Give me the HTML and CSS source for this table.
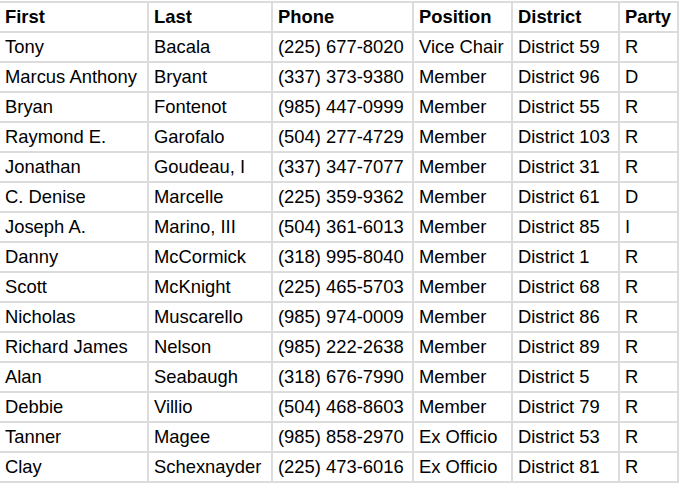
FILE: index.html
```html
<!DOCTYPE html>
<html>
<head>
<meta charset="utf-8">
<link rel="stylesheet" href="styles.css">
</head>
<body>
<div class="grid">
  <div class="c h">First</div><div class="c h">Last</div><div class="c h">Phone</div><div class="c h">Position</div><div class="c h">District</div><div class="c h">Party</div>
  <div class="c">Tony</div><div class="c">Bacala</div><div class="c">(225) 677-8020</div><div class="c">Vice Chair</div><div class="c">District 59</div><div class="c">R</div>
  <div class="c">Marcus Anthony</div><div class="c">Bryant</div><div class="c">(337) 373-9380</div><div class="c">Member</div><div class="c">District 96</div><div class="c">D</div>
  <div class="c">Bryan</div><div class="c">Fontenot</div><div class="c">(985) 447-0999</div><div class="c">Member</div><div class="c">District 55</div><div class="c">R</div>
  <div class="c">Raymond E.</div><div class="c">Garofalo</div><div class="c">(504) 277-4729</div><div class="c">Member</div><div class="c">District 103</div><div class="c">R</div>
  <div class="c">Jonathan</div><div class="c">Goudeau, I</div><div class="c">(337) 347-7077</div><div class="c">Member</div><div class="c">District 31</div><div class="c">R</div>
  <div class="c">C. Denise</div><div class="c">Marcelle</div><div class="c">(225) 359-9362</div><div class="c">Member</div><div class="c">District 61</div><div class="c">D</div>
  <div class="c">Joseph A.</div><div class="c">Marino, III</div><div class="c">(504) 361-6013</div><div class="c">Member</div><div class="c">District 85</div><div class="c">I</div>
  <div class="c">Danny</div><div class="c">McCormick</div><div class="c">(318) 995-8040</div><div class="c">Member</div><div class="c">District 1</div><div class="c">R</div>
  <div class="c">Scott</div><div class="c">McKnight</div><div class="c">(225) 465-5703</div><div class="c">Member</div><div class="c">District 68</div><div class="c">R</div>
  <div class="c">Nicholas</div><div class="c">Muscarello</div><div class="c">(985) 974-0009</div><div class="c">Member</div><div class="c">District 86</div><div class="c">R</div>
  <div class="c">Richard James</div><div class="c">Nelson</div><div class="c">(985) 222-2638</div><div class="c">Member</div><div class="c">District 89</div><div class="c">R</div>
  <div class="c">Alan</div><div class="c">Seabaugh</div><div class="c">(318) 676-7990</div><div class="c">Member</div><div class="c">District 5</div><div class="c">R</div>
  <div class="c">Debbie</div><div class="c">Villio</div><div class="c">(504) 468-8603</div><div class="c">Member</div><div class="c">District 79</div><div class="c">R</div>
  <div class="c">Tanner</div><div class="c">Magee</div><div class="c">(985) 858-2970</div><div class="c">Ex Officio</div><div class="c">District 53</div><div class="c">R</div>
  <div class="c">Clay</div><div class="c">Schexnayder</div><div class="c">(225) 473-6016</div><div class="c">Ex Officio</div><div class="c">District 81</div><div class="c">R</div>
</div>
</body>
</html>
```
FILE: styles.css
```css
html, body {
  margin: 0;
  padding: 0;
  background: #ffffff;
  overflow: hidden;
}
.grid {
  display: grid;
  grid-template-columns: 147px 122px 139px 97px 105px 57px;
  grid-auto-rows: 28px;
  gap: 2px;
  padding: 2px;
  margin: 1px 0 0 -2px;
  width: 677px;
  background: #dcdcdc;
  font-family: "Liberation Sans", Arial, sans-serif;
  font-size: 18.4px;
  color: #000;
}
.c {
  background: #fff;
  padding-left: 5px;
  display: flex;
  align-items: center;
  white-space: nowrap;
  overflow: hidden;
}
.h {
  font-weight: bold;
}
```
